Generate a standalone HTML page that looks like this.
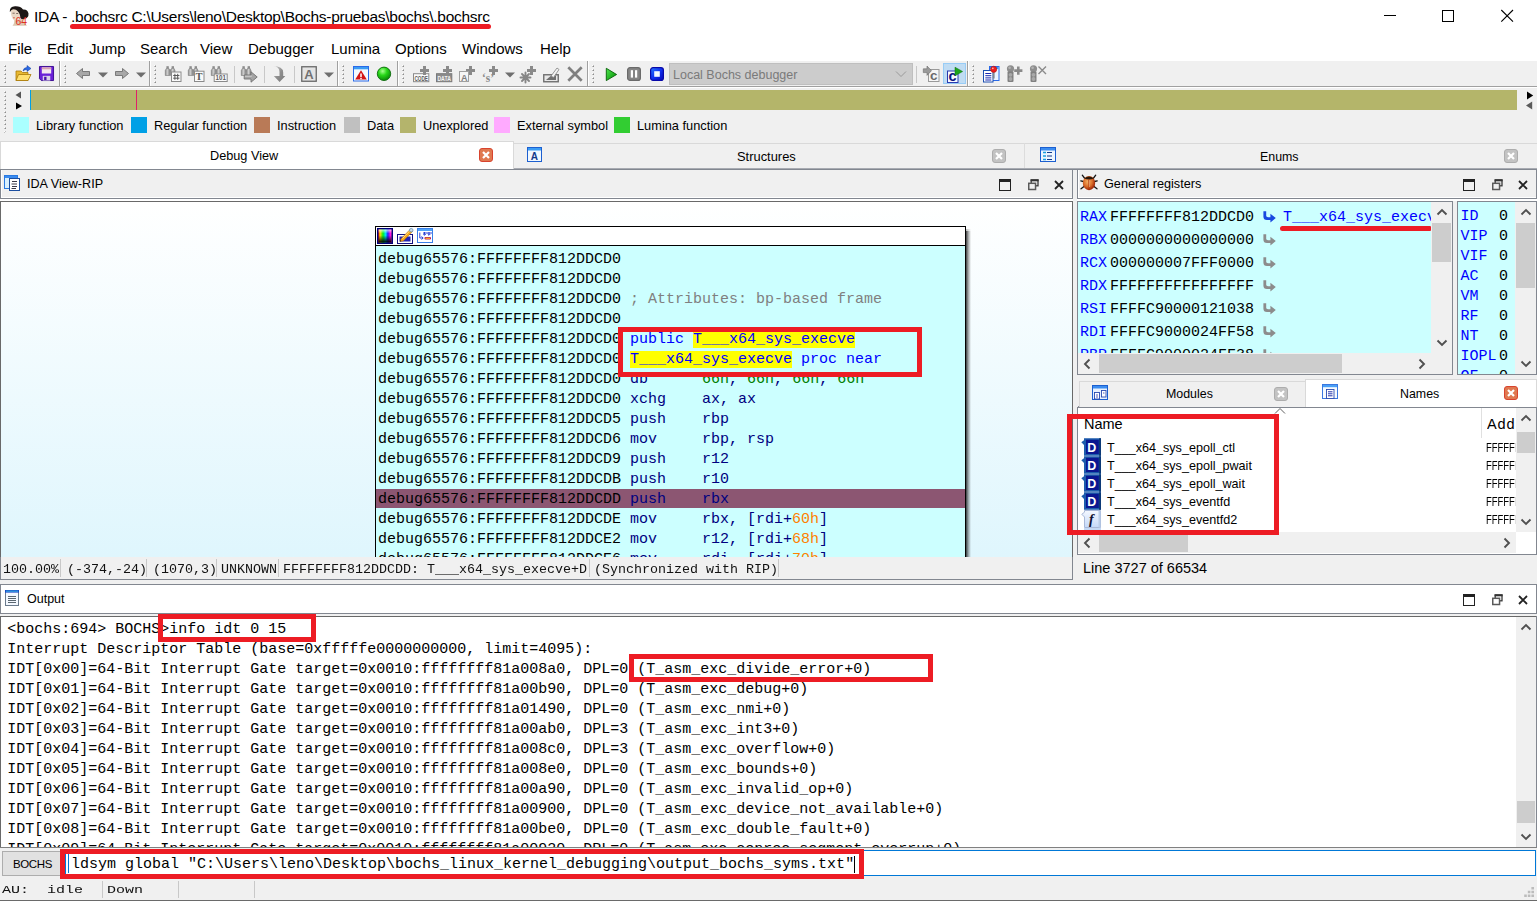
<!DOCTYPE html>
<html lang="en"><head><meta charset="utf-8"><title>IDA</title><style>
*{box-sizing:border-box;margin:0;padding:0}
html,body{width:1537px;height:901px;overflow:hidden;background:#f0f0f0}
body{position:relative;font-family:"Liberation Sans",sans-serif;font-size:13px;color:#000}
.a{position:absolute;white-space:pre}
.ui{font-family:"Liberation Sans",sans-serif}
.mono{font-family:"Liberation Mono",monospace;font-size:15px;line-height:20px}
.cour{font-family:"Liberation Mono",monospace;font-size:12px;line-height:18px;transform:scaleX(1.1111);transform-origin:0 0;color:#111}
.cour2{font-family:"Liberation Mono",monospace;font-size:11.5px;line-height:18px;transform:scaleX(1.3043);transform-origin:0 0;color:#111}
.box{position:absolute}
.grip{position:absolute;width:2px;background-image:repeating-linear-gradient(to bottom,#fff 0,#fff 1px,#8c8c8c 1px,#8c8c8c 2px,transparent 2px,transparent 4px);}
.grip:before{content:"";position:absolute;left:0;top:1px;width:1px;height:100%;background-image:repeating-linear-gradient(to bottom,#c0c0c0 0,#c0c0c0 1px,transparent 1px,transparent 4px)}
.grip:after{content:"";position:absolute;left:1px;top:0;width:1px;height:100%;background-image:repeating-linear-gradient(to bottom,#c0c0c0 0,#c0c0c0 1px,transparent 1px,transparent 4px)}
.vsep{position:absolute;width:2px;border-left:1px solid #a0a0a0;border-right:1px solid #fff}
.tsep{position:absolute;width:1px;background:#c8c8c8}
.blue{color:#0000ff}.navy{color:#000080}.gray{color:#808080}.orange{color:#ff8000}
.hl{background:#ffff00}.grn{color:#008000}
svg{position:absolute;overflow:visible}
.red{position:absolute;border:4px solid #ed1c24}
</style></head>
<body>
<div class="box" style="left:0;top:0;width:1537px;height:60px;background:#fff"></div>
<svg style="left:0px;top:0px" width="34" height="32" viewBox="0 0 34 32">
<defs><filter id="bl" x="-20%" y="-20%" width="140%" height="140%"><feGaussianBlur stdDeviation="0.450"/></filter></defs>
<g filter="url(#bl)">
<path d="M14 19 Q15 23 12.500 25.800 L27 25.800 Q24 23.500 22.500 19 Z" fill="#dcc6b0"/>
<path d="M9.800 12 Q9.500 6.500 15 6.300 Q20.500 6 23 9.500 Q27.500 9 28.500 13.500 Q28.800 18 24.500 18.800 Q22 20 20.500 18 L17 12 L12 10 Z" fill="#1a1412"/>
<path d="M11.200 10.500 Q13 8.500 16 9.800 Q19.500 12 20.300 16.500 Q20 20.500 16.500 20.800 Q13 20.500 11.800 17 Q10.500 13.500 11.200 10.500 Z" fill="#ead8c6"/>
<path d="M12.500 13.200 h2.200 M16.200 13.500 h2" stroke="#4a3830" stroke-width="0.700"/>
<path d="M13 17.800 h1.800" stroke="#d05040" stroke-width="0.900"/>
</g>
<text x="15.600" y="25.200" font-family="Liberation Sans" font-size="11.500" fill="#e03222" textLength="11.500" lengthAdjust="spacingAndGlyphs">64</text>
</svg>
<div class="a ui" style="left:34px;top:7.500px;font-size:15.500px;line-height:18px;letter-spacing:-0.280px">IDA - .bochsrc C:\Users\leno\Desktop\Bochs-pruebas\bochs\.bochsrc</div>
<div class="box" style="left:70px;top:24px;width:421px;height:5px;background:#ed1c24;border-radius:2.5px"></div>
<svg style="left:1380px;top:5px" width="140" height="24" viewBox="0 0 140 24">
<path d="M4 10.5 H16" stroke="#000" stroke-width="1" fill="none"/>
<rect x="62.5" y="5.5" width="11" height="11" stroke="#000" stroke-width="1" fill="none"/>
<path d="M121.300 5 L133 16.700 M133 5 L121.300 16.700" stroke="#000" stroke-width="1.100" fill="none"/>
</svg>
<div class="a ui" style="left:8px;top:40px;font-size:15px;line-height:18px">File</div>
<div class="a ui" style="left:47px;top:40px;font-size:15px;line-height:18px">Edit</div>
<div class="a ui" style="left:89px;top:40px;font-size:15px;line-height:18px">Jump</div>
<div class="a ui" style="left:140px;top:40px;font-size:15px;line-height:18px">Search</div>
<div class="a ui" style="left:200px;top:40px;font-size:15px;line-height:18px">View</div>
<div class="a ui" style="left:248px;top:40px;font-size:15px;line-height:18px">Debugger</div>
<div class="a ui" style="left:331px;top:40px;font-size:15px;line-height:18px">Lumina</div>
<div class="a ui" style="left:395px;top:40px;font-size:15px;line-height:18px">Options</div>
<div class="a ui" style="left:462px;top:40px;font-size:15px;line-height:18px">Windows</div>
<div class="a ui" style="left:540px;top:40px;font-size:15px;line-height:18px">Help</div>
<div class="box" style="left:0;top:60px;width:1537px;height:28px;background:#f0f0f0;border-top:1px solid #fff"></div>
<div class="box" style="left:0;top:86px;width:1537px;height:1px;background:#a0a0a0"></div>
<div class="box" style="left:0;top:87px;width:1537px;height:1px;background:#fff"></div>
<div class="grip" style="left:4px;top:65px;height:18px"></div>
<div class="grip" style="left:64px;top:65px;height:18px"></div>
<div class="grip" style="left:154px;top:65px;height:18px"></div>
<div class="grip" style="left:342px;top:65px;height:18px"></div>
<div class="grip" style="left:402px;top:65px;height:18px"></div>
<div class="grip" style="left:592px;top:65px;height:18px"></div>
<div class="grip" style="left:972px;top:65px;height:18px"></div>
<div class="vsep" style="left:59px;top:61px;height:25px"></div>
<div class="vsep" style="left:149px;top:61px;height:25px"></div>
<div class="vsep" style="left:337px;top:61px;height:25px"></div>
<div class="vsep" style="left:397px;top:61px;height:25px"></div>
<div class="vsep" style="left:587px;top:61px;height:25px"></div>
<div class="vsep" style="left:967px;top:61px;height:25px"></div>
<div class="tsep" style="left:234px;top:66px;height:17px"></div>
<div class="tsep" style="left:264px;top:66px;height:17px"></div>
<div class="tsep" style="left:294px;top:66px;height:17px"></div>
<div class="tsep" style="left:916px;top:66px;height:17px"></div>
<svg style="left:15px;top:65px" width="17" height="17" viewBox="0 0 17 17" ><path d="M1 6 H6 L7.500 7.500 H13 V15.500 H1 Z" fill="#e8b830" stroke="#a87808" stroke-width="0.800"/><path d="M3.500 9.500 H16 L13 15.500 H1 Z" fill="#ffe070" stroke="#a87808" stroke-width="0.800"/><path d="M8 6 Q8.500 2.500 12 2.500 V0.500 L16 3.500 L12 6.500 V4.500 Q9.500 4.500 8 6 Z" fill="#2a6ae8" stroke="#103a98" stroke-width="0.500"/></svg>
<svg style="left:39px;top:66px" width="15" height="15" viewBox="0 0 16 16" ><path d="M0.500 0.500 H15.500 V15.500 H2.500 L0.500 13.500 Z" fill="#6a20d8" stroke="#3a0a90"/><rect x="3" y="1.500" width="10" height="6.500" fill="#f4e8f0"/><rect x="3" y="1.500" width="10" height="2" fill="#d8a0b0"/><rect x="4" y="10.500" width="8" height="5" fill="#d8d0e8"/><rect x="5.500" y="11.500" width="2.500" height="3.500" fill="#4a10a8"/></svg>
<svg style="left:76px;top:68px" width="14" height="11" viewBox="0 0 14 11" ><path d="M0.500 5.500 L6.500 0.500 V3.500 H13.500 V7.500 H6.500 V10.500 Z" fill="#a8a8a8" stroke="#707070" stroke-width="0.900"/></svg>
<svg style="left:98px;top:72px" width="10" height="6" viewBox="0 0 10 6" ><path d="M0 0.500 H10 L5 5.500 Z" fill="#6e6e6e"/></svg>
<svg style="left:115px;top:68px" width="14" height="11" viewBox="0 0 14 11" ><path d="M13.500 5.500 L7.500 0.500 V3.500 H0.500 V7.500 H7.500 V10.500 Z" fill="#a8a8a8" stroke="#707070" stroke-width="0.900"/></svg>
<svg style="left:136px;top:72px" width="10" height="6" viewBox="0 0 10 6" ><path d="M0 0.500 H10 L5 5.500 Z" fill="#6e6e6e"/></svg>
<svg style="left:165px;top:66px" width="17" height="17" viewBox="0 0 17 17" ><defs><linearGradient id="bg1" x1="0" x2="1"><stop offset="0" stop-color="#8a8a8a"/><stop offset="0.450" stop-color="#cfcfcf"/><stop offset="1" stop-color="#858585"/></linearGradient></defs><path d="M1.300 2.500 L3.900 2.500 L4.800 4.500 L4.800 9.500 L0.300 9.500 L0.300 4.500 Z" fill="url(#bg1)" stroke="#7a7a7a" stroke-width="0.600"/><rect x="1.400" y="0.200" width="2.400" height="2.300" fill="#8c8c8c"/><g transform="translate(5.200,0)"><path d="M1.300 2.500 L3.900 2.500 L4.800 4.500 L4.800 9.500 L0.300 9.500 L0.300 4.500 Z" fill="url(#bg1)" stroke="#7a7a7a" stroke-width="0.600"/><rect x="1.400" y="0.200" width="2.400" height="2.300" fill="#8c8c8c"/></g><rect x="4.300" y="3.300" width="1.600" height="2.200" fill="#8a8a8a"/><rect x="6.500" y="6" width="9.500" height="9.500" fill="#fafafa" stroke="#8a8a8a"/><path d="M9.900 7.800 V13.800 M12.700 7.800 V13.800 M8.200 9.500 H14.400 M8.200 12.200 H14.400" stroke="#5a5a5a" stroke-width="1"/></svg>
<svg style="left:188px;top:66px" width="17" height="17" viewBox="0 0 17 17" ><defs><linearGradient id="bg1" x1="0" x2="1"><stop offset="0" stop-color="#8a8a8a"/><stop offset="0.450" stop-color="#cfcfcf"/><stop offset="1" stop-color="#858585"/></linearGradient></defs><path d="M1.300 2.500 L3.900 2.500 L4.800 4.500 L4.800 9.500 L0.300 9.500 L0.300 4.500 Z" fill="url(#bg1)" stroke="#7a7a7a" stroke-width="0.600"/><rect x="1.400" y="0.200" width="2.400" height="2.300" fill="#8c8c8c"/><g transform="translate(5.200,0)"><path d="M1.300 2.500 L3.900 2.500 L4.800 4.500 L4.800 9.500 L0.300 9.500 L0.300 4.500 Z" fill="url(#bg1)" stroke="#7a7a7a" stroke-width="0.600"/><rect x="1.400" y="0.200" width="2.400" height="2.300" fill="#8c8c8c"/></g><rect x="4.300" y="3.300" width="1.600" height="2.200" fill="#8a8a8a"/><rect x="6.500" y="5.200" width="9.500" height="10.300" fill="#fafafa" stroke="#8a8a8a"/><text x="7.600" y="14.200" font-family="Liberation Serif" font-weight="bold" font-size="10.500" fill="#5a5a5a">T</text></svg>
<svg style="left:211px;top:66px" width="17" height="17" viewBox="0 0 17 17" ><defs><linearGradient id="bg1" x1="0" x2="1"><stop offset="0" stop-color="#8a8a8a"/><stop offset="0.450" stop-color="#cfcfcf"/><stop offset="1" stop-color="#858585"/></linearGradient></defs><path d="M1.300 2.500 L3.900 2.500 L4.800 4.500 L4.800 9.500 L0.300 9.500 L0.300 4.500 Z" fill="url(#bg1)" stroke="#7a7a7a" stroke-width="0.600"/><rect x="1.400" y="0.200" width="2.400" height="2.300" fill="#8c8c8c"/><g transform="translate(5.200,0)"><path d="M1.300 2.500 L3.900 2.500 L4.800 4.500 L4.800 9.500 L0.300 9.500 L0.300 4.500 Z" fill="url(#bg1)" stroke="#7a7a7a" stroke-width="0.600"/><rect x="1.400" y="0.200" width="2.400" height="2.300" fill="#8c8c8c"/></g><rect x="4.300" y="3.300" width="1.600" height="2.200" fill="#8a8a8a"/><rect x="3.200" y="8" width="13" height="7.500" fill="#fafafa" stroke="#8a8a8a"/><text x="4.600" y="14.300" font-family="Liberation Sans" font-weight="bold" font-size="6.800" fill="#5a5a5a" textLength="10.300" lengthAdjust="spacingAndGlyphs">101</text></svg>
<svg style="left:241px;top:66px" width="17" height="17" viewBox="0 0 17 17" ><defs><linearGradient id="bg1" x1="0" x2="1"><stop offset="0" stop-color="#8a8a8a"/><stop offset="0.450" stop-color="#cfcfcf"/><stop offset="1" stop-color="#858585"/></linearGradient></defs><path d="M1.300 2.500 L3.900 2.500 L4.800 4.500 L4.800 9.500 L0.300 9.500 L0.300 4.500 Z" fill="url(#bg1)" stroke="#7a7a7a" stroke-width="0.600"/><rect x="1.400" y="0.200" width="2.400" height="2.300" fill="#8c8c8c"/><g transform="translate(5.200,0)"><path d="M1.300 2.500 L3.900 2.500 L4.800 4.500 L4.800 9.500 L0.300 9.500 L0.300 4.500 Z" fill="url(#bg1)" stroke="#7a7a7a" stroke-width="0.600"/><rect x="1.400" y="0.200" width="2.400" height="2.300" fill="#8c8c8c"/></g><rect x="4.300" y="3.300" width="1.600" height="2.200" fill="#8a8a8a"/><path d="M3.200 9 H10 V5.800 L16.200 11 L10 16.200 V13 H3.200 Z" fill="#a4a4a4" stroke="#727272" stroke-width="0.900"/><path d="M4 10.200 H10.800" stroke="#d8d8d8" stroke-width="0.900"/></svg>
<svg style="left:272px;top:65px" width="14" height="18" viewBox="0 0 14 18" ><defs><linearGradient id="dg" x1="0" x2="1" y1="0" y2="1"><stop offset="0" stop-color="#d0d0d0"/><stop offset="0.500" stop-color="#8e8e8e"/><stop offset="1" stop-color="#7a7a7a"/></linearGradient></defs><path d="M1 1 Q7.500 1.500 7.500 7 V11 H1.800 L7.600 17 L13.300 11 H11.200 V7.500 Q11 1 1 1 Z" fill="url(#dg)"/></svg>
<svg style="left:301px;top:66px" width="16" height="16" viewBox="0 0 16 16" ><rect x="0.750" y="0.750" width="14.500" height="14.500" fill="#e4e4e4" stroke="#686868" stroke-width="1.300"/><text x="3.300" y="13" font-family="Liberation Sans" font-weight="bold" font-size="13" fill="#707070">A</text></svg>
<svg style="left:324px;top:72px" width="10" height="6" viewBox="0 0 10 6" ><path d="M0 0.500 H10 L5 5.500 Z" fill="#6e6e6e"/></svg>
<svg style="left:353px;top:66px" width="16" height="16" viewBox="0 0 16 16" ><rect x="0.500" y="0.500" width="15" height="14.500" fill="#f4faff" stroke="#2a6ae8"/><rect x="1" y="1" width="14" height="2.300" fill="#3b9cf4"/><path d="M8 4.300 L13.800 13.600 H2.200 Z" fill="#d41414"/><path d="M8 7.500 V11" stroke="#fff" stroke-width="1.500"/><rect x="7.250" y="11.800" width="1.500" height="1.400" fill="#fff"/></svg>
<svg style="left:376px;top:66px" width="16" height="16" viewBox="0 0 16 16" ><defs><radialGradient id="gb" cx="0.400" cy="0.300" r="0.700"><stop offset="0" stop-color="#a8ff90"/><stop offset="0.450" stop-color="#28d818"/><stop offset="1" stop-color="#0a8a08"/></radialGradient></defs><circle cx="8" cy="7.800" r="6.700" fill="url(#gb)" stroke="#0a6a0a" stroke-width="0.900"/></svg>
<svg style="left:413px;top:65px" width="17" height="18" viewBox="0 0 17 18" ><rect x="0.500" y="8.700" width="15.300" height="8" fill="#fafafa" stroke="#8a8a8a"/><path d="M10 1 h3 v3 h3 v3 h-3 v3 h-3 v-3 h-3 v-3 h3 z" fill="#8a8a8a"/><text x="1.400" y="15.600" font-family="Liberation Sans" font-weight="bold" font-size="6.800" fill="#5a5a5a" textLength="13.500" lengthAdjust="spacingAndGlyphs">CODE</text></svg>
<svg style="left:436px;top:65px" width="17" height="18" viewBox="0 0 17 18" ><rect x="0.500" y="8.700" width="15.300" height="8" fill="#8c8c8c" stroke="#7a7a7a"/><path d="M10 1 h3 v3 h3 v3 h-3 v3 h-3 v-3 h-3 v-3 h3 z" fill="#8a8a8a"/><text x="1.400" y="15.600" font-family="Liberation Sans" font-weight="bold" font-size="6.800" fill="#f4f4f4" textLength="13.500" lengthAdjust="spacingAndGlyphs">DATA</text></svg>
<svg style="left:459px;top:65px" width="17" height="18" viewBox="0 0 17 18" ><path d="M10 1 h3 v3 h3 v3 h-3 v3 h-3 v-3 h-3 v-3 h3 z" fill="#8a8a8a"/><rect x="0.500" y="6.500" width="9" height="10" fill="#f6f6f6" stroke="#a0a0a0"/><text x="2" y="15.500" font-family="Liberation Sans" font-weight="bold" font-size="9" fill="#808080">A</text></svg>
<svg style="left:482px;top:65px" width="17" height="18" viewBox="0 0 17 18" ><path d="M10 1 h3 v3 h3 v3 h-3 v3 h-3 v-3 h-3 v-3 h3 z" fill="#8a8a8a"/><text x="0" y="16.500" font-family="Liberation Serif" font-weight="bold" font-size="13" fill="#8c8c8c" textLength="12" lengthAdjust="spacingAndGlyphs">‘s’</text></svg>
<svg style="left:505px;top:72px" width="10" height="6" viewBox="0 0 10 6" ><path d="M0 0.500 H10 L5 5.500 Z" fill="#6e6e6e"/></svg>
<svg style="left:520px;top:65px" width="17" height="18" viewBox="0 0 17 18" ><path d="M10 1 h3 v3 h3 v3 h-3 v3 h-3 v-3 h-3 v-3 h3 z" fill="#8a8a8a"/><path d="M5.500 7.500 V17.500 M0.500 12.500 H10.500 M2 9 L9 16 M9 9 L2 16" stroke="#868686" stroke-width="1.900" stroke-linecap="round"/></svg>
<svg style="left:543px;top:65px" width="18" height="18" viewBox="0 0 18 18" ><rect x="0.750" y="9.750" width="14.500" height="7" fill="#e8e8e8" stroke="#707070" stroke-width="1.400"/><path d="M3 15 L10 9 L13 11 L13 15 Z" fill="#707070"/><path d="M8 11 L14 3 L16 4.500 L10.500 12.500 Z" fill="#f4f4f4" stroke="#808080" stroke-width="0.800"/></svg>
<svg style="left:567px;top:66px" width="16" height="16" viewBox="0 0 16 16" ><path d="M1.300 1.300 L14.700 14.700 M14.700 1.300 L1.300 14.700" stroke="#808080" stroke-width="2.700"/></svg>
<svg style="left:605px;top:67px" width="13" height="15" viewBox="0 0 13 15" ><defs><linearGradient id="pg" x1="0" x2="1" y1="0" y2="1"><stop offset="0" stop-color="#50e850"/><stop offset="1" stop-color="#008a00"/></linearGradient></defs><path d="M1.300 1.300 L11.600 7.500 L1.300 13.600 Z" fill="url(#pg)" stroke="#056005" stroke-width="0.900" stroke-linejoin="round"/></svg>
<svg style="left:627px;top:67px" width="14" height="14" viewBox="0 0 14 14" ><rect x="0.600" y="0.600" width="12.800" height="12.800" rx="2.500" fill="#868686" stroke="#6a6a6a" stroke-width="1.200"/><rect x="3.800" y="3.200" width="2.200" height="7.400" fill="#fff"/><rect x="8" y="3.200" width="2.200" height="7.400" fill="#fff"/></svg>
<svg style="left:650px;top:67px" width="14" height="14" viewBox="0 0 14 14" ><defs><linearGradient id="sg" x1="0" x2="1" y1="0" y2="1"><stop offset="0" stop-color="#2a80ff"/><stop offset="0.500" stop-color="#1030f0"/><stop offset="1" stop-color="#0808b8"/></linearGradient></defs><rect x="0.600" y="0.600" width="12.800" height="12.800" rx="2.500" fill="url(#sg)" stroke="#0808a8" stroke-width="1.200"/><rect x="4.200" y="4.200" width="5.600" height="5.600" fill="#f4faff"/></svg>
<svg style="left:923px;top:65px" width="17" height="18" viewBox="0 0 17 18" ><rect x="5.500" y="4.500" width="10.500" height="12" fill="#f6f6f6" stroke="#9a9a9a"/><path d="M0.300 3.800 H4 V1 L8.500 5.700 L4 10.400 V7.600 H0.300 Z" fill="#9a9a9a" stroke="#6a6a6a" stroke-width="0.600"/><text x="7" y="15.300" font-family="Liberation Sans" font-weight="bold" font-size="13.500" fill="#6a6a6a">c</text></svg>
<div class="box" style="left:943px;top:63px;width:23px;height:21px;background:#c0dcf3;border:1px solid #98ccf6"></div>
<svg style="left:946px;top:65px" width="18" height="18" viewBox="0 0 18 18" ><rect x="1.500" y="6" width="10.500" height="11.500" fill="#fafaff" stroke="#2a3ab0"/><text x="2.600" y="16" font-family="Liberation Sans" font-weight="bold" font-size="14.500" fill="#0c1480">c</text><path d="M9 2.200 L16.600 6.500 L9 10.800 Z" fill="#1ea41e" stroke="#0a700a" stroke-width="0.500"/></svg>
<svg style="left:983px;top:65px" width="17" height="18" viewBox="0 0 17 18" ><rect x="6.500" y="1.500" width="9.500" height="14" fill="#eef6ff" stroke="#2a6ae8"/><rect x="7" y="2" width="8.500" height="2" fill="#3b9cf4"/><rect x="0.500" y="5.500" width="9.500" height="11.500" fill="#fff" stroke="#1c4fb0"/><path d="M2.300 8.500 H8.300 M2.300 10.700 H8.300 M2.300 12.900 H8.300 M2.300 15 H8.300" stroke="#1828b0" stroke-width="1"/><rect x="9.800" y="6" width="1.800" height="7.500" fill="#808890"/><circle cx="10.700" cy="4.300" r="3.100" fill="#ee1c1c" stroke="#a01010" stroke-width="0.500"/><circle cx="9.800" cy="3.300" r="0.900" fill="#ffb0b0"/></svg>
<svg style="left:1006px;top:65px" width="18" height="18" viewBox="0 0 18 18" ><circle cx="4.500" cy="3.800" r="3.600" fill="#8e8e8e"/><rect x="1.500" y="6.500" width="6" height="10.500" rx="1" fill="#808080"/><circle cx="4.500" cy="9.800" r="1.900" fill="#a8a8a8"/><circle cx="4.500" cy="14" r="1.900" fill="#a8a8a8"/><circle cx="3.600" cy="2.800" r="1.300" fill="#b4b4b4"/><path d="M11 1.500 h2.600 v2.800 h2.800 v2.600 h-2.800 v2.800 h-2.600 v-2.800 h-2.800 v-2.600 h2.800 z" fill="#8a8a8a"/></svg>
<svg style="left:1029px;top:65px" width="19" height="18" viewBox="0 0 19 18" ><circle cx="4.500" cy="3.800" r="3.600" fill="#8e8e8e"/><rect x="1.500" y="6.500" width="6" height="10.500" rx="1" fill="#808080"/><circle cx="4.500" cy="9.800" r="1.900" fill="#a8a8a8"/><circle cx="4.500" cy="14" r="1.900" fill="#a8a8a8"/><circle cx="3.600" cy="2.800" r="1.300" fill="#b4b4b4"/><path d="M9.500 1.500 L17 9 M17 1.500 L9.500 9" stroke="#8a8a8a" stroke-width="1.400"/></svg>
<div class="box" style="left:669px;top:63px;width:244px;height:22px;background:#ccc;border:1px solid #bfbfbf"></div>
<div class="a ui" style="left:673px;top:67px;font-size:12.5px;line-height:16px;color:#7a7a7a">Local Bochs debugger</div>
<svg style="left:895px;top:70px" width="12" height="8" viewBox="0 0 12 8"><path d="M1 1.5 L6 6.500 L11 1.5" stroke="#9a9a9a" stroke-width="1" fill="none"/></svg>
<div class="grip" style="left:4px;top:91px;height:41px"></div>
<div class="box" style="left:30px;top:90px;width:1487px;height:20px;background:#b4b56a"></div>
<div class="box" style="left:30px;top:90px;width:1px;height:20px;background:#00a0e6"></div>
<div class="box" style="left:136px;top:90px;width:1px;height:20px;background:#e0206a"></div>
<svg style="left:14px;top:90px" width="10" height="22" viewBox="0 0 10 22">
<path d="M7 1.500 L7 8.500 L1.5 5 Z" fill="#555"/><path d="M2 12.500 L2 19.500 L8 16 Z" fill="#000"/></svg>
<svg style="left:1525px;top:90px" width="10" height="22" viewBox="0 0 10 22">
<path d="M2 1.500 L2 9.500 L8.200 5.500 Z" fill="#000"/><path d="M7.200 11.500 L7.200 19.500 L1 15.500 Z" fill="#5a5a5a"/></svg>
<div class="box" style="left:13px;top:117px;width:16px;height:16px;background:#aaffff"></div>
<div class="a ui" style="left:36px;top:117.500px;font-size:12.8px;line-height:16px">Library function</div>
<div class="box" style="left:131px;top:117px;width:16px;height:16px;background:#00a0e6"></div>
<div class="a ui" style="left:154px;top:117.500px;font-size:12.8px;line-height:16px">Regular function</div>
<div class="box" style="left:254px;top:117px;width:16px;height:16px;background:#b97a57"></div>
<div class="a ui" style="left:277px;top:117.500px;font-size:12.8px;line-height:16px">Instruction</div>
<div class="box" style="left:344px;top:117px;width:16px;height:16px;background:#c0c0c0"></div>
<div class="a ui" style="left:367px;top:117.500px;font-size:12.8px;line-height:16px">Data</div>
<div class="box" style="left:400px;top:117px;width:16px;height:16px;background:#b4b46c"></div>
<div class="a ui" style="left:423px;top:117.500px;font-size:12.8px;line-height:16px">Unexplored</div>
<div class="box" style="left:494px;top:117px;width:16px;height:16px;background:#ffaaff"></div>
<div class="a ui" style="left:517px;top:117.500px;font-size:12.8px;line-height:16px">External symbol</div>
<div class="box" style="left:614px;top:117px;width:16px;height:16px;background:#32cd32"></div>
<div class="a ui" style="left:637px;top:117.500px;font-size:12.8px;line-height:16px">Lumina function</div>
<div class="box" style="left:0;top:141px;width:514px;height:28px;background:#fff;border:1px solid #d9d9d9;border-bottom:none"></div>
<div class="box" style="left:514px;top:143px;width:1023px;height:26px;border-top:1px solid #d9d9d9"></div>
<div class="box" style="left:1024px;top:143px;width:1px;height:26px;background:#dcdcdc"></div>
<div class="box" style="left:0;top:169px;width:1537px;height:1px;background:#828790"></div>
<div class="box" style="left:514px;top:168px;width:1023px;height:1px;background:#a8abb2"></div>
<div class="box" style="left:1078px;top:406px;width:227px;height:1px;background:#8a8f98"></div>
<div class="a ui" style="left:210px;top:148px;font-size:12.7px;line-height:16px">Debug View</div>
<div class="a ui" style="left:737px;top:149px;font-size:12.9px;line-height:16px">Structures</div>
<div class="a ui" style="left:1260px;top:149px;font-size:12.4px;line-height:16px">Enums</div>
<svg style="left:479px;top:148px" width="14" height="14" viewBox="0 0 14 14"><rect x="0.5" y="0.5" width="13" height="13" rx="2.5" fill="#e07850" stroke="#d8432e"/><path d="M4 4 L10 10 M10 4 L4 10" stroke="#fff" stroke-width="2.200"/></svg>
<svg style="left:992px;top:149px" width="14" height="14" viewBox="0 0 14 14"><rect x="0.5" y="0.5" width="13" height="13" rx="2.5" fill="#c3c3c3" stroke="#adadad"/><path d="M4 4 L10 10 M10 4 L4 10" stroke="#fff" stroke-width="2.200"/></svg>
<svg style="left:1504px;top:149px" width="14" height="14" viewBox="0 0 14 14"><rect x="0.5" y="0.5" width="13" height="13" rx="2.5" fill="#c3c3c3" stroke="#adadad"/><path d="M4 4 L10 10 M10 4 L4 10" stroke="#fff" stroke-width="2.200"/></svg>
<svg style="left:527px;top:147px" width="16" height="16" viewBox="0 0 16 16"><rect x="0.5" y="0.5" width="14" height="14" fill="#f0f8ff" stroke="#1c5fd0"/><rect x="1" y="1" width="13" height="2.500" fill="#3b9cf4"/><text x="3.800" y="13" font-family="Liberation Sans" font-size="10" font-weight="bold" fill="#123a8a">A</text></svg>
<svg style="left:1040px;top:147px" width="16" height="16" viewBox="0 0 16 16"><rect x="0.5" y="0.5" width="15" height="14" fill="#eef6ff" stroke="#1c5fd0"/><rect x="1" y="1" width="14" height="2.500" fill="#3b8cf0"/><path d="M7 5.500 H12 M7 9 H12 M7 12.500 H12" stroke="#123a8a" stroke-width="1"/><path d="M3 5.500 H6 M3 9 H6 M3 12.500 H6" stroke="#18a0e0" stroke-width="1.5"/></svg>
<div class="box" style="left:0px;top:170px;width:1073px;height:29px;background:#f0f0f0;border:1px solid #828790;border-top:none;box-shadow:inset 1px -1px 0 #fff"></div><div class="box" style="left:0px;top:199px;width:1073px;height:2px;background:#fff"></div><div class="a ui" style="left:27px;top:176px;font-size:12.6px;line-height:16px">IDA View-RIP</div><svg style="left:4px;top:175px" width="16" height="16" viewBox="0 0 16 16"><rect x="0.5" y="0.5" width="13" height="13" fill="#d8f0ff" stroke="#2a7ae2"/><rect x="1" y="1" width="12" height="2" fill="#3b8cf0"/><rect x="5.500" y="3.500" width="10" height="12" fill="#fff" stroke="#1c4fa0"/><path d="M8 6.500 H13 M7.500 9 H13 M8 11.500 H13 M7.500 13.500 H12" stroke="#223" stroke-width="0.900"/></svg><svg style="left:999px;top:179px" width="12" height="12" viewBox="0 0 12 12"><rect x="0.5" y="0.5" width="11" height="11" fill="none" stroke="#222"/><rect x="0" y="0" width="12" height="3" fill="#222"/></svg><svg style="left:1028px;top:179px" width="11" height="12" viewBox="0 0 11 12"><rect x="3.200" y="1" width="6.800" height="5.800" fill="none" stroke="#3a3a3a" stroke-width="1.300"/><rect x="2.600" y="0.300" width="8" height="2" fill="#333"/><rect x="0.750" y="4.300" width="6.800" height="6.200" fill="#f0f0f0" stroke="#5a5a5a" stroke-width="1.500"/></svg><svg style="left:1054px;top:180px" width="10" height="10" viewBox="0 0 10 10"><path d="M1 1 L9 9 M9 1 L1 9" stroke="#222" stroke-width="1.800"/></svg>
<div class="box" style="left:1077px;top:170px;width:460px;height:29px;background:#f0f0f0;border:1px solid #828790;border-top:none;box-shadow:inset 1px -1px 0 #fff"></div><div class="box" style="left:1077px;top:199px;width:460px;height:2px;background:#fff"></div><div class="a ui" style="left:1104px;top:176px;font-size:12.7px;line-height:16px">General registers</div><svg style="left:1080px;top:174px" width="18" height="18" viewBox="0 0 18 18"><defs><radialGradient id="bgd" cx="0.420" cy="0.400" r="0.650"><stop offset="0" stop-color="#f6b468"/><stop offset="0.550" stop-color="#d86a28"/><stop offset="1" stop-color="#8c1400"/></radialGradient></defs><path d="M2.300 1.200 L4.800 4.500 M15.700 1.200 L13.200 4.500 M0.800 6.800 L3.500 7.500 M17.200 6.800 L14.500 7.500 M1 14.800 L4 12.500 M17 14.800 L14 12.500" stroke="#141414" stroke-width="1.300" stroke-linecap="round"/><ellipse cx="9" cy="9.100" rx="6.200" ry="7.100" fill="url(#bgd)"/><path d="M4.200 4.600 Q9 0.300 13.800 4.600 Q9 6.600 4.200 4.600 Z" fill="#2a1608"/><path d="M8.300 5.500 L8.600 15.500 L9.400 15.500 L9.700 5.500 Z" fill="#b03810"/><path d="M9.600 6 V13" stroke="#fbe0c0" stroke-width="0.600" opacity="0.800"/></svg><svg style="left:1463px;top:179px" width="12" height="12" viewBox="0 0 12 12"><rect x="0.5" y="0.5" width="11" height="11" fill="none" stroke="#222"/><rect x="0" y="0" width="12" height="3" fill="#222"/></svg><svg style="left:1492px;top:179px" width="11" height="12" viewBox="0 0 11 12"><rect x="3.200" y="1" width="6.800" height="5.800" fill="none" stroke="#3a3a3a" stroke-width="1.300"/><rect x="2.600" y="0.300" width="8" height="2" fill="#333"/><rect x="0.750" y="4.300" width="6.800" height="6.200" fill="#f0f0f0" stroke="#5a5a5a" stroke-width="1.500"/></svg><svg style="left:1518px;top:180px" width="10" height="10" viewBox="0 0 10 10"><path d="M1 1 L9 9 M9 1 L1 9" stroke="#222" stroke-width="1.800"/></svg>
<div class="box" style="left:0;top:201px;width:1073px;height:356px;background:linear-gradient(to bottom,#fff 0,#dff6fd 100%);border:1px solid #696969;border-bottom:none"></div>
<div class="box" style="left:966px;top:231px;width:5px;height:326px;background:linear-gradient(to right,rgba(0,0,0,0.75),rgba(0,0,0,0.35) 45%,rgba(0,0,0,0))"></div>
<div class="box" style="left:966px;top:229px;width:5px;height:2px;background:linear-gradient(to right,rgba(0,0,0,0.25),rgba(0,0,0,0))"></div>
<div class="box" style="left:375px;top:226px;width:591px;height:331px;background:#ccffff;border:1px solid #000;border-bottom:none"></div>
<div class="box" style="left:376px;top:227px;width:589px;height:19px;background:#fff;border-bottom:1px solid #000"></div>
<svg style="left:377px;top:228px" width="58" height="16" viewBox="0 0 58 16">
<defs><linearGradient id="rb" x1="0" x2="1"><stop offset="0" stop-color="#ff3000"/><stop offset="0.120" stop-color="#ffe000"/><stop offset="0.350" stop-color="#00f020"/><stop offset="0.550" stop-color="#00e0ff"/><stop offset="0.720" stop-color="#2020ff"/><stop offset="0.900" stop-color="#ff00f0"/><stop offset="1" stop-color="#ff40c0"/></linearGradient>
<linearGradient id="bk" x1="0" x2="0" y1="0" y2="1"><stop offset="0" stop-color="#fff" stop-opacity="0.750"/><stop offset="0.300" stop-color="#fff" stop-opacity="0"/><stop offset="0.450" stop-color="#000" stop-opacity="0"/><stop offset="1" stop-color="#000" stop-opacity="1"/></linearGradient></defs>
<rect x="0" y="0" width="16" height="16" fill="#000078"/><rect x="1.500" y="1.500" width="13" height="13" fill="url(#rb)"/><rect x="1.500" y="1.500" width="13" height="13" fill="url(#bk)"/>
<rect x="20.500" y="6.500" width="15" height="9" fill="#fff" stroke="#101080"/><rect x="22.500" y="8.500" width="11" height="5" fill="#2424b4"/><path d="M23 13.500 L24 10.800 L33 1.500 L35.500 3.500 L26.500 12.800 Z" fill="#f8a818" stroke="#b06800" stroke-width="0.500"/><path d="M25.500 10.500 L33.500 2.200" stroke="#ffe8a0" stroke-width="0.800"/><circle cx="34.200" cy="2.200" r="1.800" fill="#c8d8e8" stroke="#4080b0" stroke-width="0.600"/><path d="M23 13.500 L23.400 12.300 L24.300 13 Z" fill="#000"/>
<rect x="40.500" y="0.500" width="15" height="14" fill="#fff" stroke="#3a80e8"/><rect x="41" y="1" width="14" height="2" fill="#50a4f8"/><path d="M42.800 4.500 V10 H46 M44.500 8.500 L46.200 10 L44.500 11.500 M46 5 H55 M47.500 4 V6.800 M52 4 V6.800 M46.200 6 L47.500 7.300 L48.800 6 M50.700 6 L52 7.300 L53.300 6" stroke="#1a30d0" fill="none" stroke-width="0.900"/><rect x="47.500" y="9" width="6.500" height="2.600" rx="1" fill="#b01860"/><rect x="48.500" y="9.700" width="4.500" height="1.200" fill="#ffb020"/>
</svg>
<div class="box" style="left:376px;top:489px;width:589px;height:19px;background:#8c5672"></div>
<div class="box" style="left:376px;top:250px;width:589px;height:307px;overflow:hidden">
<div class="a mono" style="left:2px;top:0px">debug65576:FFFFFFFF812DDCD0</div>
<div class="a mono" style="left:2px;top:20px">debug65576:FFFFFFFF812DDCD0</div>
<div class="a mono" style="left:2px;top:40px">debug65576:FFFFFFFF812DDCD0 <span class="gray">; Attributes: bp-based frame</span></div>
<div class="a mono" style="left:2px;top:60px">debug65576:FFFFFFFF812DDCD0</div>
<div class="a mono" style="left:2px;top:80px">debug65576:FFFFFFFF812DDCD0 <span class="blue">public <span class="hl">T___x64_sys_execve</span></span></div>
<div class="a mono" style="left:2px;top:100px">debug65576:FFFFFFFF812DDCD0 <span class="blue"><span class="hl">T___x64_sys_execve</span> proc near</span></div>
<div class="a mono" style="left:2px;top:120px">debug65576:FFFFFFFF812DDCD0 <span class="navy">db      <span class="grn">66h</span>, <span class="grn">66h</span>, <span class="grn">66h</span>, <span class="grn">66h</span></span></div>
<div class="a mono" style="left:2px;top:140px">debug65576:FFFFFFFF812DDCD0 <span class="navy">xchg    ax, ax</span></div>
<div class="a mono" style="left:2px;top:160px">debug65576:FFFFFFFF812DDCD5 <span class="navy">push    rbp</span></div>
<div class="a mono" style="left:2px;top:180px">debug65576:FFFFFFFF812DDCD6 <span class="navy">mov     rbp, rsp</span></div>
<div class="a mono" style="left:2px;top:200px">debug65576:FFFFFFFF812DDCD9 <span class="navy">push    r12</span></div>
<div class="a mono" style="left:2px;top:220px">debug65576:FFFFFFFF812DDCDB <span class="navy">push    r10</span></div>
<div class="a mono" style="left:2px;top:240px">debug65576:FFFFFFFF812DDCDD <span class="navy">push    rbx</span></div>
<div class="a mono" style="left:2px;top:260px">debug65576:FFFFFFFF812DDCDE <span class="navy">mov     rbx, [rdi+<span class="orange">60h</span>]</span></div>
<div class="a mono" style="left:2px;top:280px">debug65576:FFFFFFFF812DDCE2 <span class="navy">mov     r12, [rdi+<span class="orange">68h</span>]</span></div>
<div class="a mono" style="left:2px;top:300px">debug65576:FFFFFFFF812DDCE6 <span class="navy">mov     rdi, [rdi+<span class="orange">70h</span>]</span></div>
</div>
<div class="red" style="left:618px;top:327px;width:304px;height:50px;border-width:5px"></div>
<div class="box" style="left:0;top:557px;width:1073px;height:23px;background:#f0f0f0;border:1px solid #828790;border-top:none"></div>
<div class="a cour" style="left:3px;top:561px">100.00%</div>
<div class="a cour" style="left:67px;top:561px">(-374,-24)</div>
<div class="a cour" style="left:153px;top:561px">(1070,3)</div>
<div class="a cour" style="left:221px;top:561px">UNKNOWN</div>
<div class="a cour" style="left:283px;top:561px">FFFFFFFF812DDCDD: T___x64_sys_execve+D</div>
<div class="a cour" style="left:594px;top:561px">(Synchronized with RIP)</div>
<div class="box" style="left:60px;top:559px;width:1px;height:18px;background:#c8c8c8"></div>
<div class="box" style="left:146px;top:559px;width:1px;height:18px;background:#c8c8c8"></div>
<div class="box" style="left:216px;top:559px;width:1px;height:18px;background:#c8c8c8"></div>
<div class="box" style="left:278px;top:559px;width:1px;height:18px;background:#c8c8c8"></div>
<div class="box" style="left:589px;top:559px;width:1px;height:18px;background:#c8c8c8"></div>
<div class="box" style="left:778px;top:559px;width:1px;height:18px;background:#c8c8c8"></div>
<div class="box" style="left:1077px;top:201px;width:376px;height:174px;background:#f0f0f0;border:1px solid #828790"></div>
<div class="box" style="left:1078px;top:202px;width:353px;height:151px;background:#ccffff;overflow:hidden">
<div class="a mono" style="left:2px;top:4px;line-height:23px"><span class="blue">RAX</span></div>
<div class="a mono" style="left:32px;top:4px;line-height:23px">FFFFFFFF812DDCD0</div>
<div class="box" style="left:0;top:4px;width:300px;height:23px"><svg style="left:184.500px;top:4.500px;position:absolute" width="14" height="12" viewBox="0 0 14 12"><path d="M0.400 0.300 H3.200 V4.800 Q3.200 6.200 5 6.200 H7.400 V2.800 L12.800 7 L7.400 11.400 V9 H4 Q0.400 9 0.400 5.500 Z" fill="#1848e0"/></svg></div>
<div class="a mono" style="left:2px;top:27px;line-height:23px"><span class="blue">RBX</span></div>
<div class="a mono" style="left:32px;top:27px;line-height:23px">0000000000000000</div>
<div class="box" style="left:0;top:27px;width:300px;height:23px"><svg style="left:184.500px;top:4.500px;position:absolute" width="14" height="12" viewBox="0 0 14 12"><path d="M0.400 0.300 H3.200 V4.800 Q3.200 6.200 5 6.200 H7.400 V2.800 L12.800 7 L7.400 11.400 V9 H4 Q0.400 9 0.400 5.500 Z" fill="#8c8c8c"/></svg></div>
<div class="a mono" style="left:2px;top:50px;line-height:23px"><span class="blue">RCX</span></div>
<div class="a mono" style="left:32px;top:50px;line-height:23px">000000007FFF0000</div>
<div class="box" style="left:0;top:50px;width:300px;height:23px"><svg style="left:184.500px;top:4.500px;position:absolute" width="14" height="12" viewBox="0 0 14 12"><path d="M0.400 0.300 H3.200 V4.800 Q3.200 6.200 5 6.200 H7.400 V2.800 L12.800 7 L7.400 11.400 V9 H4 Q0.400 9 0.400 5.500 Z" fill="#8c8c8c"/></svg></div>
<div class="a mono" style="left:2px;top:73px;line-height:23px"><span class="blue">RDX</span></div>
<div class="a mono" style="left:32px;top:73px;line-height:23px">FFFFFFFFFFFFFFFF</div>
<div class="box" style="left:0;top:73px;width:300px;height:23px"><svg style="left:184.500px;top:4.500px;position:absolute" width="14" height="12" viewBox="0 0 14 12"><path d="M0.400 0.300 H3.200 V4.800 Q3.200 6.200 5 6.200 H7.400 V2.800 L12.800 7 L7.400 11.400 V9 H4 Q0.400 9 0.400 5.500 Z" fill="#8c8c8c"/></svg></div>
<div class="a mono" style="left:2px;top:96px;line-height:23px"><span class="blue">RSI</span></div>
<div class="a mono" style="left:32px;top:96px;line-height:23px">FFFFC90000121038</div>
<div class="box" style="left:0;top:96px;width:300px;height:23px"><svg style="left:184.500px;top:4.500px;position:absolute" width="14" height="12" viewBox="0 0 14 12"><path d="M0.400 0.300 H3.200 V4.800 Q3.200 6.200 5 6.200 H7.400 V2.800 L12.800 7 L7.400 11.400 V9 H4 Q0.400 9 0.400 5.500 Z" fill="#8c8c8c"/></svg></div>
<div class="a mono" style="left:2px;top:119px;line-height:23px"><span class="blue">RDI</span></div>
<div class="a mono" style="left:32px;top:119px;line-height:23px">FFFFC9000024FF58</div>
<div class="box" style="left:0;top:119px;width:300px;height:23px"><svg style="left:184.500px;top:4.500px;position:absolute" width="14" height="12" viewBox="0 0 14 12"><path d="M0.400 0.300 H3.200 V4.800 Q3.200 6.200 5 6.200 H7.400 V2.800 L12.800 7 L7.400 11.400 V9 H4 Q0.400 9 0.400 5.500 Z" fill="#8c8c8c"/></svg></div>
<div class="a mono" style="left:2px;top:142px;line-height:23px"><span class="blue">RBP</span></div>
<div class="a mono" style="left:32px;top:142px;line-height:23px">FFFFC9000024FF38</div>
<div class="box" style="left:0;top:142px;width:300px;height:23px"><svg style="left:184.500px;top:4.500px;position:absolute" width="14" height="12" viewBox="0 0 14 12"><path d="M0.400 0.300 H3.200 V4.800 Q3.200 6.200 5 6.200 H7.400 V2.800 L12.800 7 L7.400 11.400 V9 H4 Q0.400 9 0.400 5.500 Z" fill="#8c8c8c"/></svg></div>
<div class="a mono" style="left:205px;top:4px;line-height:23px"><span class="blue">T___x64_sys_execve</span></div>
</div>
<div class="box" style="left:1280px;top:226px;width:152px;height:5px;background:#ed1c24;border-radius:2.5px"></div>
<div class="box" style="left:1431px;top:202px;width:21px;height:151px;background:#f0f0f0"></div><div class="box" style="left:1432px;top:223px;width:19px;height:39px;background:#cdcdcd"></div><svg style="left:1435.5px;top:208px" width="12" height="8" viewBox="0 0 12 8"><path d="M1.500 6.500 L6 2 L10.500 6.500" stroke="#505050" stroke-width="1.900" fill="none"/></svg><svg style="left:1435.5px;top:338.5px" width="12" height="8" viewBox="0 0 12 8"><path d="M1.500 1.500 L6 6 L10.500 1.500" stroke="#505050" stroke-width="1.900" fill="none"/></svg>
<div class="box" style="left:1078px;top:353px;width:353px;height:21px;background:#f0f0f0"></div><div class="box" style="left:1099px;top:354px;width:243px;height:19px;background:#cdcdcd"></div><svg style="left:1083px;top:357.5px" width="8" height="12" viewBox="0 0 8 12"><path d="M6.500 1.500 L2 6 L6.500 10.500" stroke="#505050" stroke-width="1.900" fill="none"/></svg><svg style="left:1418px;top:357.5px" width="8" height="12" viewBox="0 0 8 12"><path d="M1.500 1.500 L6 6 L1.500 10.500" stroke="#505050" stroke-width="1.900" fill="none"/></svg>
<div class="box" style="left:1457px;top:201px;width:80px;height:174px;background:#f0f0f0;border:1px solid #828790"></div>
<div class="box" style="left:1458px;top:202px;width:57px;height:172px;background:#ccffff;overflow:hidden">
<div class="a mono" style="left:2.400px;top:5px"><span class="blue">ID</span></div>
<div class="a mono" style="left:41px;top:5px">0</div>
<div class="a mono" style="left:2.400px;top:25px"><span class="blue">VIP</span></div>
<div class="a mono" style="left:41px;top:25px">0</div>
<div class="a mono" style="left:2.400px;top:45px"><span class="blue">VIF</span></div>
<div class="a mono" style="left:41px;top:45px">0</div>
<div class="a mono" style="left:2.400px;top:65px"><span class="blue">AC</span></div>
<div class="a mono" style="left:41px;top:65px">0</div>
<div class="a mono" style="left:2.400px;top:85px"><span class="blue">VM</span></div>
<div class="a mono" style="left:41px;top:85px">0</div>
<div class="a mono" style="left:2.400px;top:105px"><span class="blue">RF</span></div>
<div class="a mono" style="left:41px;top:105px">0</div>
<div class="a mono" style="left:2.400px;top:125px"><span class="blue">NT</span></div>
<div class="a mono" style="left:41px;top:125px">0</div>
<div class="a mono" style="left:2.400px;top:145px"><span class="blue">IOPL</span></div>
<div class="a mono" style="left:41px;top:145px">0</div>
<div class="a mono" style="left:2.400px;top:165px"><span class="blue">OF</span></div>
<div class="a mono" style="left:41px;top:165px">0</div>
</div>
<div class="box" style="left:1515px;top:202px;width:21px;height:172px;background:#f0f0f0"></div><div class="box" style="left:1516px;top:223px;width:19px;height:65px;background:#cdcdcd"></div><svg style="left:1519.5px;top:208px" width="12" height="8" viewBox="0 0 12 8"><path d="M1.500 6.500 L6 2 L10.500 6.500" stroke="#505050" stroke-width="1.900" fill="none"/></svg><svg style="left:1519.5px;top:359.5px" width="12" height="8" viewBox="0 0 12 8"><path d="M1.500 1.500 L6 6 L10.500 1.500" stroke="#505050" stroke-width="1.900" fill="none"/></svg>
<div class="box" style="left:1079px;top:381px;width:227px;height:26px;background:#f0f0f0;border-top:1px solid #d9d9d9;border-left:1px solid #d9d9d9"></div>
<div class="box" style="left:1305px;top:379px;width:232px;height:28px;background:#fff;border:1px solid #d9d9d9;border-bottom:none"></div>
<div class="a ui" style="left:1166px;top:386px;font-size:12.4px;line-height:16px">Modules</div>
<div class="a ui" style="left:1400px;top:386px;font-size:12.4px;line-height:16px">Names</div>
<svg style="left:1274px;top:387px" width="14" height="14" viewBox="0 0 14 14"><rect x="0.5" y="0.5" width="13" height="13" rx="2.5" fill="#c3c3c3" stroke="#adadad"/><path d="M4 4 L10 10 M10 4 L4 10" stroke="#fff" stroke-width="2.200"/></svg>
<svg style="left:1504px;top:386px" width="14" height="14" viewBox="0 0 14 14"><rect x="0.5" y="0.5" width="13" height="13" rx="2.5" fill="#e07850" stroke="#d8432e"/><path d="M4 4 L10 10 M10 4 L4 10" stroke="#fff" stroke-width="2.200"/></svg>
<svg style="left:1092px;top:385px" width="17" height="16" viewBox="0 0 17 16"><rect x="0.5" y="0.5" width="15" height="14" fill="#e8f2ff" stroke="#1c5fd0"/><rect x="1" y="1" width="14" height="2.500" fill="#3b8cf0"/><rect x="2.500" y="7.500" width="5" height="6.500" fill="#fff" stroke="#2a4ab0" stroke-width="0.900"/><path d="M4 10 H6 M4 12 H6" stroke="#2233aa" stroke-width="0.800"/><rect x="9.500" y="5.500" width="4.500" height="6.500" fill="#fff" stroke="#2a4ab0" stroke-width="0.900"/><path d="M11 8 H12.500" stroke="#2233aa" stroke-width="0.800"/></svg>
<svg style="left:1322px;top:384px" width="17" height="16" viewBox="0 0 17 16"><rect x="0.5" y="0.5" width="15" height="14" fill="#f6fbff" stroke="#3a78e0"/><rect x="1" y="1" width="14" height="2.200" fill="#4aa0f6"/><rect x="4.500" y="5.500" width="7.500" height="9" fill="#fff" stroke="#2a4ab0" stroke-width="0.900"/><path d="M6 7.800 H10.500 M6 9.800 H10.500 M6 11.800 H10.500" stroke="#2233aa" stroke-width="1"/></svg>
<div class="box" style="left:1077px;top:407px;width:460px;height:148px;background:#fff;border:1px solid #828790"></div>
<div class="box" style="left:1481px;top:408px;width:1px;height:30px;background:#e0e0e0"></div>
<div class="a ui" style="left:1084px;top:415px;font-size:14.5px;line-height:18px">Name</div>
<div class="a ui" style="left:1487px;top:415px;font-size:14.5px;line-height:18px;width:28px;overflow:hidden;letter-spacing:0.9px">Addr</div>
<svg style="left:1274px;top:408px" width="12" height="6" viewBox="0 0 12 6"><path d="M1 5.500 L6 0.500 L11 5.500" stroke="#606060" fill="none"/></svg>
<svg style="left:1081px;top:438px" width="20" height="18" viewBox="0 0 20 18"><path d="M3 0.300 H20 V17.700 H3 V7 L0.300 4.300 L3 2.200 Z" fill="#1c5cac"/><rect x="5" y="1.800" width="12.800" height="14.200" fill="#0a1690"/><rect x="18" y="0.300" width="2" height="17.400" fill="#0c3a78"/><text x="6.300" y="14" font-family="Liberation Sans" font-size="12.500" font-weight="bold" fill="#fff">D</text></svg>
<div class="a ui" style="left:1107px;top:440px;font-size:12.6px;line-height:16px">T___x64_sys_epoll_ctl</div>
<div class="a ui" style="left:1485.500px;top:440px;font-size:12.6px;line-height:16px;width:39.400px;overflow:hidden;transform:scaleX(0.750);transform-origin:0 0">FFFFFFFF</div>
<svg style="left:1081px;top:456px" width="20" height="18" viewBox="0 0 20 18"><path d="M3 0.300 H20 V17.700 H3 V7 L0.300 4.300 L3 2.200 Z" fill="#1c5cac"/><rect x="5" y="1.800" width="12.800" height="14.200" fill="#0a1690"/><rect x="18" y="0.300" width="2" height="17.400" fill="#0c3a78"/><text x="6.300" y="14" font-family="Liberation Sans" font-size="12.500" font-weight="bold" fill="#fff">D</text></svg>
<div class="a ui" style="left:1107px;top:458px;font-size:12.6px;line-height:16px">T___x64_sys_epoll_pwait</div>
<div class="a ui" style="left:1485.500px;top:458px;font-size:12.6px;line-height:16px;width:39.400px;overflow:hidden;transform:scaleX(0.750);transform-origin:0 0">FFFFFFFF</div>
<svg style="left:1081px;top:474px" width="20" height="18" viewBox="0 0 20 18"><path d="M3 0.300 H20 V17.700 H3 V7 L0.300 4.300 L3 2.200 Z" fill="#1c5cac"/><rect x="5" y="1.800" width="12.800" height="14.200" fill="#0a1690"/><rect x="18" y="0.300" width="2" height="17.400" fill="#0c3a78"/><text x="6.300" y="14" font-family="Liberation Sans" font-size="12.500" font-weight="bold" fill="#fff">D</text></svg>
<div class="a ui" style="left:1107px;top:476px;font-size:12.6px;line-height:16px">T___x64_sys_epoll_wait</div>
<div class="a ui" style="left:1485.500px;top:476px;font-size:12.6px;line-height:16px;width:39.400px;overflow:hidden;transform:scaleX(0.750);transform-origin:0 0">FFFFFFFF</div>
<svg style="left:1081px;top:492px" width="20" height="18" viewBox="0 0 20 18"><path d="M3 0.300 H20 V17.700 H3 V7 L0.300 4.300 L3 2.200 Z" fill="#1c5cac"/><rect x="5" y="1.800" width="12.800" height="14.200" fill="#0a1690"/><rect x="18" y="0.300" width="2" height="17.400" fill="#0c3a78"/><text x="6.300" y="14" font-family="Liberation Sans" font-size="12.500" font-weight="bold" fill="#fff">D</text></svg>
<div class="a ui" style="left:1107px;top:494px;font-size:12.6px;line-height:16px">T___x64_sys_eventfd</div>
<div class="a ui" style="left:1485.500px;top:494px;font-size:12.6px;line-height:16px;width:39.400px;overflow:hidden;transform:scaleX(0.750);transform-origin:0 0">FFFFFFFF</div>
<svg style="left:1081px;top:510px" width="20" height="18" viewBox="0 0 20 18"><path d="M3.500 0.500 H19.500 V17.500 H3.500 V7 L0.800 4.300 L3.500 2.200 Z" fill="url(#fg)" stroke="#a8b8d8"/><rect x="17.500" y="1" width="2" height="16.500" fill="#b8cce8"/><text x="8" y="14" font-family="Liberation Serif" font-size="14" font-style="italic" font-weight="bold" fill="#101030">f</text></svg>
<div class="a ui" style="left:1107px;top:512px;font-size:12.6px;line-height:16px">T___x64_sys_eventfd2</div>
<div class="a ui" style="left:1485.500px;top:512px;font-size:12.6px;line-height:16px;width:39.400px;overflow:hidden;transform:scaleX(0.750);transform-origin:0 0">FFFFFFFF</div>
<svg width="0" height="0" style="left:0;top:0"><defs><linearGradient id="fg" x1="0" x2="0" y1="0" y2="1"><stop offset="0" stop-color="#f4f8ff"/><stop offset="1" stop-color="#c4d8f8"/></linearGradient></defs></svg>
<div class="box" style="left:1084px;top:528px;width:17px;height:3px;background:#c4d8f4"></div>
<div class="box" style="left:1516px;top:408px;width:20px;height:124px;background:#f0f0f0"></div><div class="box" style="left:1517px;top:432px;width:18px;height:21px;background:#cdcdcd"></div><svg style="left:1520.0px;top:414px" width="12" height="8" viewBox="0 0 12 8"><path d="M1.500 6.500 L6 2 L10.500 6.500" stroke="#505050" stroke-width="1.900" fill="none"/></svg><svg style="left:1520.0px;top:517.5px" width="12" height="8" viewBox="0 0 12 8"><path d="M1.500 1.500 L6 6 L10.500 1.500" stroke="#505050" stroke-width="1.900" fill="none"/></svg>
<div class="box" style="left:1078px;top:532px;width:438px;height:21px;background:#f0f0f0"></div><div class="box" style="left:1099px;top:533px;width:89px;height:19px;background:#cdcdcd"></div><svg style="left:1083px;top:536.5px" width="8" height="12" viewBox="0 0 8 12"><path d="M6.500 1.500 L2 6 L6.500 10.500" stroke="#505050" stroke-width="1.900" fill="none"/></svg><svg style="left:1503px;top:536.5px" width="8" height="12" viewBox="0 0 8 12"><path d="M1.500 1.500 L6 6 L1.500 10.500" stroke="#505050" stroke-width="1.900" fill="none"/></svg>
<div class="red" style="left:1067px;top:414px;width:212px;height:121px;border-width:5px"></div>
<div class="a ui" style="left:1083px;top:559px;font-size:14.5px;line-height:18px">Line 3727 of 66534</div>
<div class="box" style="left:0;top:584px;width:1537px;height:1px;background:#828790"></div>
<div class="box" style="left:0px;top:585px;width:1537px;height:29px;background:#fff;border:1px solid #828790;border-top:none;box-shadow:inset 1px -1px 0 #fff"></div><div class="box" style="left:0px;top:614px;width:1537px;height:2px;background:#f0f0f0"></div><div class="a ui" style="left:27px;top:591px;font-size:12.5px;line-height:16px">Output</div><svg style="left:5px;top:590px" width="14" height="16" viewBox="0 0 14 16"><rect x="0.500" y="0.500" width="13" height="15" fill="#f4f8ff" stroke="#6a7a8c"/><rect x="0" y="0" width="14" height="2.600" fill="#1848c8"/><rect x="1" y="0.700" width="12" height="0.900" fill="#40c0e8"/><path d="M3 6.500 H11 M3 8.500 H11 M3 10.500 H11 M3 12.500 H11" stroke="#5a6670" stroke-width="1"/></svg><svg style="left:1463px;top:594px" width="12" height="12" viewBox="0 0 12 12"><rect x="0.5" y="0.5" width="11" height="11" fill="none" stroke="#222"/><rect x="0" y="0" width="12" height="3" fill="#222"/></svg><svg style="left:1492px;top:594px" width="11" height="12" viewBox="0 0 11 12"><rect x="3.200" y="1" width="6.800" height="5.800" fill="none" stroke="#3a3a3a" stroke-width="1.300"/><rect x="2.600" y="0.300" width="8" height="2" fill="#333"/><rect x="0.750" y="4.300" width="6.800" height="6.200" fill="#fff" stroke="#5a5a5a" stroke-width="1.500"/></svg><svg style="left:1518px;top:595px" width="10" height="10" viewBox="0 0 10 10"><path d="M1 1 L9 9 M9 1 L1 9" stroke="#222" stroke-width="1.800"/></svg>
<div class="box" style="left:0;top:616px;width:1537px;height:232px;background:#fff;border:1px solid #696969;border-bottom:none;border-right:none"></div>
<div class="box" style="left:1px;top:616px;width:1514px;height:232px;overflow:hidden">
<div class="a mono" style="left:6.200px;top:4px">&lt;bochs:694&gt; BOCHS&gt;info idt 0 15</div>
<div class="a mono" style="left:6.200px;top:24px">Interrupt Descriptor Table (base=0xfffffe0000000000, limit=4095):</div>
<div class="a mono" style="left:6.200px;top:44px">IDT[0x00]=64-Bit Interrupt Gate target=0x0010:ffffffff81a008a0, DPL=0 (T_asm_exc_divide_error+0)</div>
<div class="a mono" style="left:6.200px;top:64px">IDT[0x01]=64-Bit Interrupt Gate target=0x0010:ffffffff81a00b90, DPL=0 (T_asm_exc_debug+0)</div>
<div class="a mono" style="left:6.200px;top:84px">IDT[0x02]=64-Bit Interrupt Gate target=0x0010:ffffffff81a01490, DPL=0 (T_asm_exc_nmi+0)</div>
<div class="a mono" style="left:6.200px;top:104px">IDT[0x03]=64-Bit Interrupt Gate target=0x0010:ffffffff81a00ab0, DPL=3 (T_asm_exc_int3+0)</div>
<div class="a mono" style="left:6.200px;top:124px">IDT[0x04]=64-Bit Interrupt Gate target=0x0010:ffffffff81a008c0, DPL=3 (T_asm_exc_overflow+0)</div>
<div class="a mono" style="left:6.200px;top:144px">IDT[0x05]=64-Bit Interrupt Gate target=0x0010:ffffffff81a008e0, DPL=0 (T_asm_exc_bounds+0)</div>
<div class="a mono" style="left:6.200px;top:164px">IDT[0x06]=64-Bit Interrupt Gate target=0x0010:ffffffff81a00a90, DPL=0 (T_asm_exc_invalid_op+0)</div>
<div class="a mono" style="left:6.200px;top:184px">IDT[0x07]=64-Bit Interrupt Gate target=0x0010:ffffffff81a00900, DPL=0 (T_asm_exc_device_not_available+0)</div>
<div class="a mono" style="left:6.200px;top:204px">IDT[0x08]=64-Bit Interrupt Gate target=0x0010:ffffffff81a00be0, DPL=0 (T_asm_exc_double_fault+0)</div>
<div class="a mono" style="left:6.200px;top:224px">IDT[0x09]=64-Bit Interrupt Gate target=0x0010:ffffffff81a00920, DPL=0 (T_asm_exc_coproc_segment_overrun+0)</div>
</div>
<div class="box" style="left:1516px;top:617px;width:20px;height:230px;background:#f0f0f0"></div><div class="box" style="left:1517px;top:801px;width:18px;height:22px;background:#cdcdcd"></div><svg style="left:1520.0px;top:623px" width="12" height="8" viewBox="0 0 12 8"><path d="M1.500 6.500 L6 2 L10.500 6.500" stroke="#505050" stroke-width="1.900" fill="none"/></svg><svg style="left:1520.0px;top:832.5px" width="12" height="8" viewBox="0 0 12 8"><path d="M1.500 1.500 L6 6 L10.500 1.500" stroke="#505050" stroke-width="1.900" fill="none"/></svg>
<div class="box" style="left:1536px;top:616px;width:1px;height:232px;background:#828790"></div>
<div class="red" style="left:158px;top:614px;width:158px;height:28px;border-width:5px"></div>
<div class="red" style="left:629px;top:654px;width:304px;height:28px;border-width:5px"></div>
<div class="box" style="left:0;top:847px;width:1537px;height:32px;background:#f0f0f0;border-top:1px solid #808080"></div>
<div class="box" style="left:2px;top:851px;width:60px;height:25px;background:#e1e1e1;border:1px solid #adadad"></div>
<div class="a ui" style="left:13px;top:857px;font-size:11.5px;line-height:14px;letter-spacing:-0.4px">BOCHS</div>
<div class="box" style="left:65px;top:850px;width:1471px;height:26px;background:#fff;border:1px solid #0078d7"></div>
<div class="a mono" style="left:71px;top:855px">ldsym global "C:\Users\leno\Desktop\bochs_linux_kernel_debugging\output_bochs_syms.txt"</div>
<div class="box" style="left:68px;top:854px;width:1px;height:19px;background:#0078d7"></div>
<div class="box" style="left:854px;top:856px;width:1px;height:17px;background:#000"></div>
<div class="red" style="left:60px;top:849px;width:804px;height:30px;border-width:5px"></div>
<div class="box" style="left:0;top:879px;width:1537px;height:22px;background:#f0f0f0"></div>
<div class="a cour2" style="left:2px;top:881px">AU:  idle</div>
<div class="a cour2" style="left:107px;top:881px">Down</div>
<div class="box" style="left:102px;top:881px;width:1px;height:17px;background:#c8c8c8"></div>
<div class="box" style="left:178px;top:881px;width:1px;height:17px;background:#c8c8c8"></div>
<div class="box" style="left:254px;top:881px;width:1px;height:17px;background:#c8c8c8"></div>
<div class="box" style="left:0;top:900px;width:1537px;height:1px;background:#6a6a6a"></div>
<svg style="left:1523px;top:886px" width="12" height="12" viewBox="0 0 12 12"><path d="M8.400 1 h2.600 v2.600 h-2.600z M8.400 4.700 h2.600 v2.600 h-2.600z M8.400 8.400 h2.600 v2.600 h-2.600z M4.800 4.700 h2.600 v2.600 h-2.600z M4.800 8.400 h2.600 v2.600 h-2.600z M1.200 8.400 h2.600 v2.600 h-2.600z" fill="#bcbcbc"/></svg>
</body></html>
